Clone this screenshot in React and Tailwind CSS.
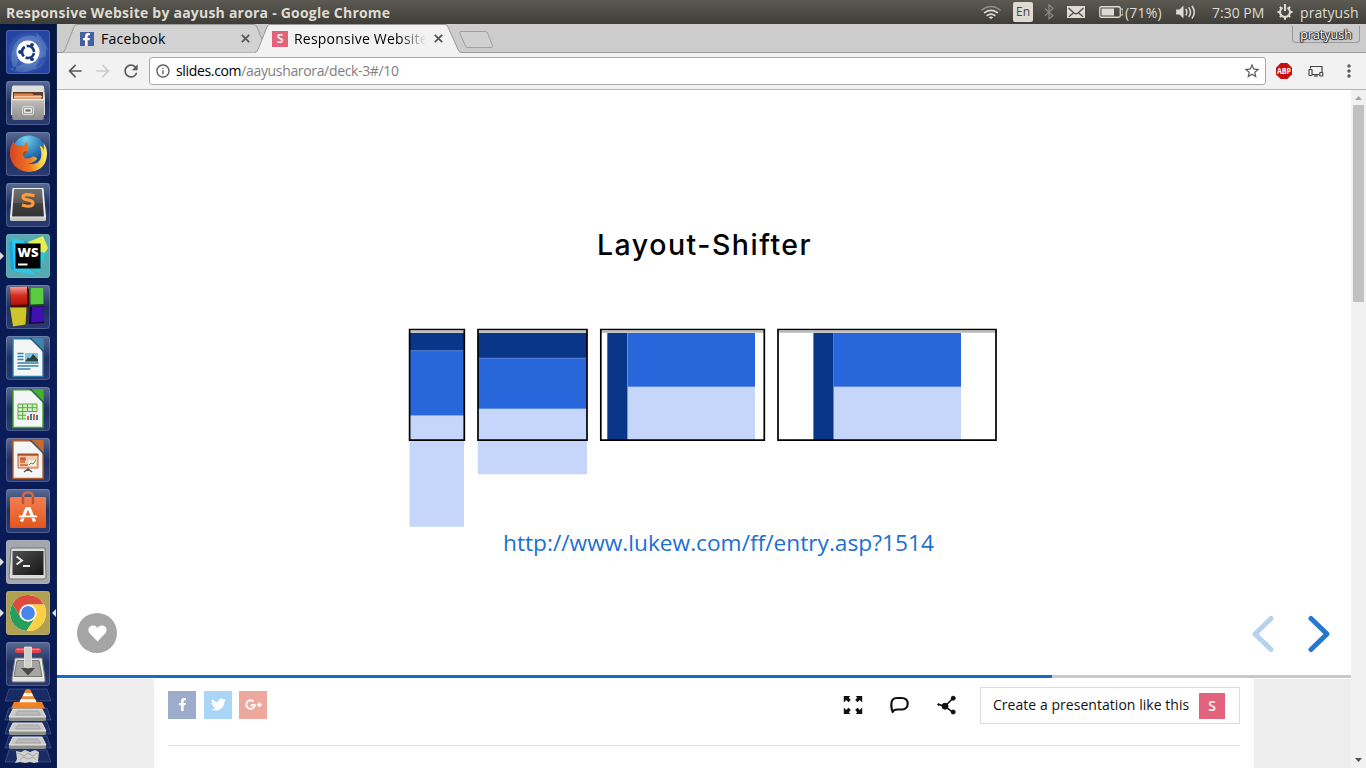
import React from "react";
import { FaFacebookF, FaTwitter } from "react-icons/fa";
import { MdArrowBack, MdArrowForward, MdRefresh, MdStarBorder, MdMoreVert, MdInfoOutline } from "react-icons/md";

const UI = "font-['Open_Sans','Noto_Sans',sans-serif]";

/* ---------- Top panel ---------- */

function Panel() {
  return (
    <header className="flex h-6 shrink-0 items-center bg-linear-to-b from-[#5c5a52] to-[#3e3d39] pl-1.5 text-[#dfdbd2]">
      <h1 className="flex-1 whitespace-nowrap text-[14px] font-bold tracking-[0.22px]">
        Responsive Website by aayush arora - Google Chrome
      </h1>
      <svg className="h-6 w-[24px]" viewBox="979 0 24 24" fill="none" stroke="#dfdbd2" strokeWidth="1.6" strokeLinecap="round">
        <path d="M982 9.8q9-6.6 18 0" opacity=".45" />
        <path d="M984.6 12.7q6.400-4.600 12.800 0" />
        <path d="M987.200 15.500q3.800-2.800 7.600 0" />
        <path d="M989.300 17.300l1.700 1.500 1.700-1.500q-1.700-1.100-3.400 0z" fill="#dfdbd2" strokeWidth=".6" />
      </svg>
      <span className="ml-[10px] flex h-[20px] w-[20px] items-center justify-center rounded-[2px] bg-[#dfdbd2] text-[12px] text-[#45433e]">
        En
      </span>
      <svg className="ml-[10px] h-6 w-[12px]" viewBox="1043 0 12 24" fill="none" stroke="#8b8880" strokeWidth="1.3">
        <path d="M1045 8.500l8 7.200-4 3V5l4 3.300-8 7.400" />
      </svg>
      <svg className="ml-[12px] h-6 w-[18px]" viewBox="0 0 18 24">
        <rect y="6" width="18" height="12" fill="#dfdbd2" />
        <path d="M1.500 8l5.500 5 1.500.8h1l1.500-.8 5.500-5M2 16.800l4.500-4M16 16.800l-4.500-4" fill="none" stroke="#4a4843" strokeWidth="1.200" />
      </svg>
      <svg className="ml-[14px] h-6 w-[24px]" viewBox="0 0 24 24">
        <rect x=".75" y="6.750" width="20.500" height="10.500" rx="1.500" fill="none" stroke="#dfdbd2" strokeWidth="1.300" />
        <rect x="2.500" y="8.500" width="12.500" height="7" fill="#dfdbd2" />
        <path d="M22 9h2v6h-2" fill="none" stroke="#dfdbd2" />
      </svg>
      <span className="ml-[2px] w-[40px] whitespace-nowrap text-[14px] tracking-[0.2px]">(71%)</span>
      <svg className="ml-[11px] h-6 w-[21px]" viewBox="0 0 21 24" fill="none" stroke="#dfdbd2" strokeWidth="1.500" strokeLinecap="round">
        <path d="M.5 10h3l3.500-3.500v11L3.500 14h-3z" fill="#dfdbd2" strokeWidth="1" />
        <path d="M10 9.500q1.800 2.700 0 5.400M13 7.800q3 4.400 0 8.600M16.200 6.300q4.200 5.900 0 11.700" />
      </svg>
      <span className="ml-[15px] w-[54px] whitespace-nowrap text-[14px]">7:30 PM</span>
      <svg className="ml-[11px] h-6 w-[16px]" viewBox="0 0 16 24" fill="none" stroke="#dfdbd2">
        <path d="M5.500 7.700a5 5 0 1 0 5 0" strokeWidth="2" />
        <path d="M8 4v7" strokeWidth="2" />
        <path d="M2.900 6.900l1.500 1.500M13.100 6.900l-1.500 1.500M.5 12h2.500M13 12h2.500M2.900 17.100l1.500-1.500M13.100 17.100l-1.500-1.500M8 17v2.800" strokeWidth="2" />
      </svg>
      <span className="ml-[7px] w-[66px] whitespace-nowrap text-[14px] tracking-[0.1px]">pratyush</span>
    </header>
  );
}

/* ---------- Launcher ---------- */

const DashIcon = () => (
  <>
    <defs>
      <radialGradient id="dash"><stop offset="0" stopColor="#6d92d2" /><stop offset="1" stopColor="#2344a0" /></radialGradient>
    </defs>
    <rect width="44" height="44" rx="3" fill="url(#dash)" />
    <path d="M9 42Q1 27 10 13q6-7 13-7Q12 12 13 25M30 2q10 8 10 20 0 13-12 18 6-8 5-18M7 18Q15 0 34 8q6 4 8 13-8-9-16-9M3 39q11 6 23 1 12-5 14-14" fill="#8eaee0" opacity=".3" />
    <circle cx="22" cy="22" r="11.500" fill="#fff" />
    <circle cx="22" cy="22" r="6" fill="none" stroke="#16397c" strokeWidth="2.600" strokeDasharray="10.600 2" strokeDashoffset="-1" />
    <g fill="#16397c"><circle cx="14" cy="22" r="1.900" /><circle cx="26" cy="14.800" r="1.900" /><circle cx="26" cy="29.200" r="1.900" /></g>
  </>
);
const FilesIcon = () => (
  <>
    <defs><linearGradient id="fil" x2="0" y2="1"><stop offset="0" stopColor="#c2c1bf" /><stop offset="1" stopColor="#8e8d8b" /></linearGradient></defs>
    <path d="M7.500 4.500h29q1.200 0 1.500 1.500l1 10v18H5V16L6 6q.3-1.500 1.500-1.500z" fill="#dededc" />
    <path d="M7 11h30v8H7z" fill="#5d4034" />
    <path d="M8 12.500h18l2 1.500h7v5H8z" fill="#e4813f" />
    <path d="M8 15h28v1.500H8z" fill="#f9c9a2" />
    <path d="M5.500 18h33l-.8 19.500q-.2 1.500-2 1.500H8q-1.500 0-1.700-1.500z" fill="url(#fil)" />
    <path d="M5.500 17.700h33v1.500h-33z" fill="#f0f0ee" />
    <rect x="16.500" y="25.500" width="11" height="8" rx="1.500" fill="#a5a4a2" stroke="#dcdcda" />
    <rect x="18.800" y="27.800" width="6.400" height="3.400" fill="#666" stroke="#fff" strokeWidth="1.200" />
  </>
);
const FirefoxIcon = () => (
  <>
    <defs>
      <radialGradient id="ffb" cx=".4" cy=".1" r=".7"><stop offset="0" stopColor="#6fd3f2" /><stop offset="1" stopColor="#11509c" /></radialGradient>
      <linearGradient id="ffo" x1="0" x2="1"><stop offset="0" stopColor="#d8431f" /><stop offset=".55" stopColor="#ee7a22" /><stop offset=".85" stopColor="#fbd23f" /><stop offset="1" stopColor="#fff08a" /></linearGradient>
    </defs>
    <circle cx="23" cy="20.500" r="17" fill="url(#ffb)" />
    <path d="M7.500 9q.5 3 2.500 4.500 4-1 7 1l4-5q0 4 1.500 6.500l-.5 4q-3 1-5 3 .5 3.500 4 3.500 3.500 0 6-2 4 .5 4 2.500-4 5-10 4 10 3 13.500-4 2-6-1-14 3.500 2 4.500 6l-.5-8q5 7 3 15-2.500 13-17.500 14Q6.500 38.500 4 24q-.5-9 3.500-15z" fill="url(#ffo)" />
    <path d="M17.500 20q2-1 4.500-.5l-5 3.500z" fill="#7c2712" opacity=".6" />
  </>
);
const SublimeIcon = () => (
  <>
    <defs><linearGradient id="sub" x2="0" y2="1"><stop offset="0" stopColor="#727272" /><stop offset=".5" stopColor="#565656" /><stop offset=".52" stopColor="#424242" /><stop offset="1" stopColor="#333" /></linearGradient></defs>
    <path d="M6.500 5h31l2.500 29v2q0 2-2 2H6q-2 0-2-2v-2z" fill="#f0f0f0" />
    <path d="M4.200 34.500h35.600v1.500q0 2-2 2H6.200q-2 0-2-2z" fill="#c4c4c4" />
    <path d="M8 6h28l2 27.500H6z" fill="url(#sub)" />
    <path d="M28.500 12.800q-11-2.800-11.500 1.200 0 2.200 5.200 3 5.300 1 4.800 4-1.500 3.800-11 1" fill="none" stroke="#ff9a36" strokeWidth="3.200" />
  </>
);
const WebStormIcon = () => (
  <>
    <rect width="44" height="44" rx="3" fill="#56a9ae" />
    <path d="M3 8l19-1L14 38 5 35z" fill="#15a6e8" />
    <path d="M22 8l15-6 5 12-8 12z" fill="#e6ee55" />
    <path d="M6 4l12 3 4 27 8 7-22-4z" fill="#2fc8ea" />
    <path d="M31 17l9 2-7 19-8-3z" fill="#20cce0" />
    <rect x="9.500" y="9.500" width="25" height="25" fill="#000" />
    <text x="11.500" y="22.500" fontSize="13" fontWeight="800" fill="#fff" textLength="21" lengthAdjust="spacingAndGlyphs" className="font-['Open_Sans',sans-serif]">WS</text>
    <path d="M12 30.500h9.500" stroke="#fff" strokeWidth="1.800" />
  </>
);
const BlocksIcon = () => (
  <>
    <defs><linearGradient id="redb" x2="0" y2="1"><stop offset="0" stopColor="#f0a098" /><stop offset=".5" stopColor="#d62a1f" /><stop offset="1" stopColor="#b31309" /></linearGradient></defs>
    <path d="M4 2l17-.5 2 3v17L5 23z" fill="#380909" />
    <path d="M4 2l17-.5.5 18L5 20z" fill="url(#redb)" />
    <path d="M24 3h14v18H25z" fill="#164d0c" /><path d="M24.500 3h13v16l-13 .5z" fill="#58cb3e" />
    <path d="M4 22l18-.5v17L7 42z" fill="#39350b" /><path d="M4 22.500h16.500l-1 17L7 41.500z" fill="#cec52d" />
    <path d="M24 22l14-1v17l-15 1z" fill="#180044" /><path d="M26 22l12-.5v15l-13 1z" fill="#4210b1" />
  </>
);
function DocIcon({ edge, fold, children }) {
  return (
    <>
      <path d="M7 2.700h19L37 14v26.500H7z" fill="#f4f5f5" stroke={edge} strokeWidth="1.400" />
      <path d="M26 2h11.700v12.500z" fill={fold} />
      <path d="M25 2l13 13v2L23 2z" fill="#123b68" opacity=".75" />
      {children}
    </>
  );
}
const WriterIcon = () => (
  <DocIcon edge="#287caa" fold="#3d86b0">
    <rect x="19" y="17" width="13" height="8.500" fill="#82c4e4" /><path d="M19 25.500l3-4 2 1 3-4.500 5 5.500v2z" fill="#28453c" />
    <path d="M11.500 17.500h6M11.500 20.500h6M11.500 23.500h6M11.500 27h21M11.500 30h21M11.500 33h13" stroke="#3683b4" strokeWidth="1.500" />
  </DocIcon>
);
const CalcIcon = () => (
  <DocIcon edge="#38a220" fold="#45b02a">
    <path d="M12 17h19v15H12z" fill="#d5f0c6" />
    <path d="M12 17h19v15H12zM12 20.700h19M12 24.500h19M12 28.300h19M16.700 17v15M21.500 17v15M26.300 17v15" fill="none" stroke="#58ab45" />
    <path d="M20 25h12v9H20z" fill="#eee" /><path d="M21 29h2v4h-2zM27 27h2v6h-2z" fill="#d86b34" /><path d="M24 27h2v6h-2zM30 28h2v5h-2z" fill="#3a7eb7" />
  </DocIcon>
);
const ImpressIcon = () => (
  <DocIcon edge="#b65d2b" fold="#c66931">
    <path d="M12 17h20v13H12z" fill="#f7c9ae" stroke="#bf6339" /><path d="M11.500 16.500h21" stroke="#a55027" strokeWidth="2" />
    <path d="M14 20h5v2h-5M14 24h5M14 27h9" stroke="#c76337" strokeWidth="1.500" fill="#c76337" />
    <path d="M22 22h8v6h-8z" fill="#eaf0e5" /><path d="M23 27l2-2 2 1 3-4" stroke="#43a141" fill="none" />
    <path d="M22 30v3M18 34l4-3 4 3" stroke="#555" strokeWidth="1.500" fill="none" />
  </DocIcon>
);
const SoftwareIcon = () => (
  <>
    <defs><linearGradient id="bag" x2="0" y2="1"><stop offset="0" stopColor="#f28050" /><stop offset="1" stopColor="#e3551d" /></linearGradient></defs>
    <path d="M17 13V7.500q0-4 5-4t5 4V13" fill="none" stroke="#d2684a" strokeWidth="2.600" />
    <path d="M4 9q0-1 1-1h34q1 0 1 1v29q0 1-1 1H5q-1 0-1-1z" fill="url(#bag)" />
    <path d="M17 14V9M27 14V9" stroke="#c05030" strokeWidth="2.600" strokeLinecap="round" />
    <path d="M15.500 32.500l5.200-13h2.600l5.200 13" fill="none" stroke="#fff" strokeWidth="3.200" />
    <path d="M13 27.500h18" stroke="#fff" strokeWidth="1.800" /><path d="M14 28.900h16" stroke="#e8662f" strokeWidth=".8" />
  </>
);
const TerminalIcon = () => (
  <>
    <defs><linearGradient id="term" x2="1" y2="1"><stop offset="0" stopColor="#505050" /><stop offset="1" stopColor="#151515" /></linearGradient></defs>
    <rect width="44" height="44" rx="3" fill="#a5a7ae" />
    <path d="M5 8h34l1 29q0 2-2 2H5q-2 0-2-2z" fill="#dbdcd9" stroke="#73736f" />
    <rect x="6.500" y="11" width="31" height="24" fill="url(#term)" />
    <path d="M10.500 16.500l5.500 4-5.500 4M17 26h7" fill="none" stroke="#eee" strokeWidth="1.800" />
  </>
);
const ChromeIcon = () => (
  <>
    <rect width="44" height="44" rx="3" fill="#b1a052" />
    <circle cx="22" cy="22" r="18" fill="#fff" />
    <path d="M22 13.500H37.900A18 18 0 0 0 6.400 13L14.500 26.500A9 9 0 0 1 22 13.500z" fill="#dc4b3e" />
    <path d="M6.400 13A18 18 0 0 0 20.500 40L29 27A9 9 0 0 1 14.500 26.500z" fill="#25a05c" />
    <path d="M37.900 13.500A18 18 0 0 1 20.500 40L29.500 26.500A9 9 0 0 0 22 13.500z" fill="#fdcf42" />
    <circle cx="22" cy="22" r="8.500" fill="#fff" /><circle cx="22" cy="22" r="6.900" fill="#4886ed" />
  </>
);
const TransmissionIcon = () => (
  <>
    <path d="M9 16h27l3 20v3q0 1-1 1H7q-1 0-1-1v-3z" fill="#e4e5e2" stroke="#747471" />
    <path d="M11 18.500h22l3 16H8z" fill="#a5a6a2" stroke="#777" />
    <rect x="9" y="6" width="26" height="5" rx="2.500" fill="#df4247" /><path d="M10.500 7.300h23" stroke="#f3989a" />
    <path d="M19 20h6v6h4l-7 7.500-7-7.500h4z" fill="#4a4b48" />
    <path d="M18.500 5h7v20q-3.500 2-7 0z" fill="#cfcfcc" stroke="#f2f2f0" strokeWidth=".7" />
  </>
);

const APPS = [
  { icon: DashIcon }, { icon: FilesIcon }, { icon: FirefoxIcon }, { icon: SublimeIcon },
  { icon: WebStormIcon, running: true }, { icon: BlocksIcon }, { icon: WriterIcon }, { icon: CalcIcon },
  { icon: ImpressIcon }, { icon: SoftwareIcon }, { icon: TerminalIcon, running: true },
  { icon: ChromeIcon, running: true, active: true }, { icon: TransmissionIcon },
];

function FoldedStack() {
  return (
    <svg className="h-[80px] w-[56px] shrink-0" viewBox="0 688 56 80">
      {[689, 708, 722, 736, 750].map((y) => (
        <path key={y} d={`M9 ${y}h38l4 12H5z`} fill="#40568e" fillOpacity=".3" stroke="#6075a4" strokeOpacity=".45" />
      ))}
      <path d="M14 702h28l3 6.500H11z" fill="#ef801d" />
      <path d="M25.500 690q2.500-2 5 0l7 14q-9.500 4-19 0z" fill="#f0872b" />
      <path d="M24.300 693h7.400l1.600 3.200h-10.600zM21 699h14l1.700 3.200H19.300z" fill="#f7f4ed" />
      {[710, 724, 738].map((y) => (
        <g key={y}>
          <path d={`M13 ${y - 1}h29l4 8v3q0 1-2 1H11q-2 0-2-1v-3z`} fill="#8d8f8d" />
          <path d={`M13 ${y - 1}h29l4 8H9z`} fill="#c9cac8" stroke="#f2f2f0" strokeWidth=".8" />
          <path d={`M18 ${y + 1}h20l2.500 4H15.500z`} fill="#bbbcba" stroke="#999" strokeWidth=".7" />
        </g>
      ))}
      <path d="M16 751l5 1 4-2 5 2 5-2 4 2-1 9 1 1-5 1-4-1-5 1-5-1-5 1 2-4z" fill="#cfd1ce" />
      <path d="M18 753l6 3 4-3 5 3 4-3M20 760l3-3 5 2 5-2 3 3" fill="none" stroke="#a5a8a6" strokeWidth="1" />
    </svg>
  );
}

function Launcher() {
  return (
    <nav className="flex w-[57px] shrink-0 flex-col border-r border-[#15234f] bg-linear-to-b from-[#041640] via-[#0a1d5a] to-[#091a51]">
      <div className="flex flex-col gap-[7px] pt-[6px] pb-[2px]">
        {APPS.map(({ icon: Icon, running, active }, i) => (
          <div key={i} className="flex h-[44px] items-center">
            <svg className="h-[10px] w-[6px]" viewBox="0 0 6 10">{running && <path d="M0 1l4 4-4 4z" fill="#dcdcdc" />}</svg>
            <div className="h-[44px] w-[44px] overflow-hidden rounded-[3px] bg-linear-to-b from-[#5a6b93] via-[#1e2f62] to-[#2a3b72]">
              <svg viewBox="0 0 44 44" className="h-full w-full">
                <Icon />
                <rect x=".5" y=".5" width="43" height="43" rx="3" fill="none" stroke="#b9c5df" strokeOpacity=".25" />
              </svg>
            </div>
            <svg className="h-[10px] w-[6px]" viewBox="0 0 6 10">{active && <path d="M6 1L2 5l4 4z" fill="#dcdcdc" />}</svg>
          </div>
        ))}
      </div>
      <FoldedStack />
    </nav>
  );
}

/* ---------- Browser chrome ---------- */

const CloseX = () => (
  <svg className="h-[9px] w-[9px] shrink-0" viewBox="0 0 9 9"><path d="M.8.8l7.400 7.400M8.200.8L.8 8.200" stroke="#555" strokeWidth="1.700" /></svg>
);

function TabStrip() {
  return (
    <div className="flex h-[29px] shrink-0 bg-[#ccc] shadow-[inset_0_-1px_0_#999]">
      <div className="relative ml-[5px] h-[29px] w-[207px]">
        <svg className="absolute inset-0 h-full w-full" viewBox="0 0 207 29">
          <path d="M.5 28.500Q2 28 3 25.500L12 3Q13 .5 15 .5H192q2 0 3 2.500L204 25.500q1 2.500 3 3" fill="#d2d2d2" stroke="#999" />
        </svg>
        <div className="relative flex h-full items-center pl-[18px]">
          <span className="flex h-[14px] w-[14px] items-end justify-end bg-[#4460a0] pr-[1px] text-[13px] text-white"><FaFacebookF /></span>
          <span className="ml-[7px] w-[140px] whitespace-nowrap text-[14px] tracking-[0.3px]">Facebook</span>
          <CloseX />
        </div>
      </div>
      <div className="relative ml-[-14px] h-[29px] w-[207px]">
        <svg className="absolute inset-0 h-full w-full" viewBox="0 0 207 29">
          <path d="M0 29Q2 28 3 25.500L12 3Q13 .5 15 .5H190q2 0 3 2.500L203 25.500q1 2.500 3 3V29z" fill="#f2f2f2" />
          <path d="M0 28.500Q2 28 3 25.500L12 3Q13 .5 15 .5H190q2 0 3 2.500L203 25.500q1 2.500 3 3" fill="none" stroke="#999" />
        </svg>
        <div className="relative flex h-full items-center pl-[17px]">
          <span className="flex h-[16px] w-[16px] items-center justify-center bg-[#e4637c] text-[12px] font-semibold text-white">S</span>
          <span className="ml-[6px] w-[132px] overflow-hidden whitespace-nowrap text-[14px] tracking-[0.22px] [mask-image:linear-gradient(to_right,#000_106px,transparent_132px)]">
            Responsive Website
          </span>
          <span className="ml-[8px] flex"><CloseX /></span>
        </div>
      </div>
      <svg className="ml-[-4px] h-[29px] w-[36px]" viewBox="458 0 36 29">
        <path d="M461 7.500h24.500q1.500 0 2 1.500l5 12.500q.5 2-1.500 2h-23q-2 0-2.500-1.500L459.700 9q-.5-1.500 1.300-1.500z" fill="#d0d0d0" stroke="#a0a0a0" />
      </svg>
      <div className="ml-auto mr-[6px] mt-[2px] flex h-[17px] w-[68px] items-end justify-center rounded-b-[4px] border border-t-0 border-[#999] text-[12.500px] leading-[15px] text-white [text-shadow:0_0_1px_#222,0_0_1px_#222,0_1px_1px_#222,1px_0_1px_#222,-1px_0_1px_#222]">
        pratyush
      </div>
    </div>
  );
}

function Toolbar() {
  return (
    <div className="flex h-[37px] shrink-0 items-center border-b border-[#b5b5b5] bg-[#f2f2f2] text-[#5a5a5a]">
      <MdArrowBack className="ml-[8px] h-[20px] w-[20px]" />
      <MdArrowForward className="ml-[8px] h-[20px] w-[20px] text-[#ccc]" />
      <MdRefresh className="ml-[8px] h-[20px] w-[20px]" />
      <div className="ml-[8px] flex h-[28px] w-[1117px] items-center rounded-[3px] border border-[#a9a9a9] bg-white">
        <MdInfoOutline className="ml-[5px] h-[16px] w-[16px]" />
        <span className="ml-[5px] flex-1 whitespace-nowrap pb-[2px] text-[14px] tracking-[-0.34px] text-[#808080]">
          <span className="text-black">slides.com</span>/aayusharora/deck-3#/10
        </span>
        <MdStarBorder className="mr-[4px] h-[18px] w-[18px]" />
      </div>
      <svg className="ml-[10px] h-[16px] w-[16px]" viewBox="0 0 16 16">
        <path d="M4.700 0h6.600L16 4.700v6.600L11.300 16H4.700L0 11.300V4.700z" fill="#c70d0d" />
        <text x="1" y="11.200" fontSize="9" fontWeight="bold" fill="#fff" textLength="14" lengthAdjust="spacingAndGlyphs">ABP</text>
      </svg>
      <svg className="ml-[16px] h-[14px] w-[16px]" viewBox="0 0 16 14" fill="none" stroke="#444">
        <path d="M2.500 4.500v-2h11.500V9M4 10.500h7" strokeWidth="1.200" />
        <rect x="1" y="5.500" width="3" height="6" rx=".5" fill="#fff" strokeWidth="1.200" /><path d="M6 12h4M8 10.500v2" />
        <rect x="11.800" y="8.500" width="3" height="3.500" rx=".5" fill="#fff" strokeWidth="1.200" />
      </svg>
      <MdMoreVert className="ml-[15px] h-[20px] w-[20px]" />
    </div>
  );
}

/* ---------- Slide ---------- */

function LayoutDiagram() {
  return (
    <svg className="h-[200px] w-[590px]" viewBox="408 328 590 200">
      <g fill="#c5d6fa">
        <path d="M409.500 415.500h54.500v111.300h-54.500zM477.800 408.700H587v65.600H477.800zM627.800 387H755v53H627.800zM833.800 387H961v53H833.800z" />
      </g>
      <path d="M410 350h54v65.500h-54zM478 358h109v50.700H478zM627.800 333H755v53.700H627.800zM833.800 333H961v53.700H833.800z" fill="#2866db" />
      <path d="M410 333h54v17.500h-54zM478 333h109v25H478zM607.300 333h20.200v107h-20.200zM813.400 333h20.200v107h-20.200z" fill="#0a368a" />
      <path d="M410 350.700h54M478 358.200h109M627.700 333v54" stroke="#6c8fce" strokeWidth=".7" />
      <path d="M410 331.800h54M478 331.800h109M601 331.800h163M778 331.800h218" stroke="#b7bcb9" strokeWidth="2" />
      <path d="M409.600 329.500h54.700v110.700h-54.700zM478 329.500h109v110.700H478zM600.800 329.500h163.500v110.700H600.800zM778 329.500h218v110.700H778z" fill="none" stroke="#000" strokeWidth="1.700" />
    </svg>
  );
}

function Slide() {
  return (
    <section className="flex h-[585px] shrink-0 flex-col bg-white">
      <h2 className="mt-[133px] ml-[540px] h-[44px] whitespace-nowrap font-['Inter',sans-serif] text-[28.5px] leading-[44px] font-medium tracking-[1.5px] text-black">
        Layout-Shifter
      </h2>
      <div className="mt-[61px] ml-[351px] h-[200px]"><LayoutDiagram /></div>
      <a className="ml-[446px] h-[32px] whitespace-nowrap text-[22.700px] leading-[30px] text-[#1b70cf]">http://www.lukew.com/ff/entry.asp?1514</a>
      <div className="mt-[53px] flex items-center pl-[20px] pr-[21px]">
        <span className="flex h-[40px] w-[40px] items-center justify-center rounded-full bg-[#a5a5a5]">
          <svg className="h-[17px] w-[19px]" viewBox="0 0 19 17"><path d="M9.500 16.500L1.200 7.700C-1.300 3.500 2 .5 5 .5q3 0 4.500 2.300Q11 .5 14 .5c3 0 6.300 3 3.800 7.200z" fill="#fff" /></svg>
        </span>
        <svg className="ml-auto h-[40px] w-[80px]" viewBox="0 0 80 40" fill="none" strokeWidth="5" strokeLinecap="round" strokeLinejoin="round">
          <path d="M21 5.500L5 21l16 15.500" stroke="#b7d2ef" /><path d="M61 5.500L77 21 61 36.500" stroke="#2577d2" />
        </svg>
      </div>
    </section>
  );
}

function ActionBar() {
  return (
    <section className="flex flex-1 flex-col bg-[#ededed]">
      <div className="mx-[97px] flex flex-1 flex-col bg-white px-[14px]">
        <div className="flex h-[67px] shrink-0 items-start border-b border-[#dcdcdc] pt-[8px]">
          <span className="mt-[4px] flex h-[28px] w-[28px] items-center justify-center bg-[#9eaccc] pb-[2px] text-[13px] text-white"><FaFacebookF /></span>
          <span className="mt-[4px] ml-[8px] flex h-[28px] w-[28px] items-center justify-center bg-[#aad5f7] pb-[2px] text-[15px] text-white"><FaTwitter /></span>
          <span className="mt-[4px] ml-[7px] flex h-[28px] w-[28px] items-center justify-center bg-[#eea79d]">
            <svg className="h-[12px] w-[17px]" viewBox="0 0 17 12" fill="none" stroke="#fff" strokeWidth="1.900">
              <path d="M8.700 2.500A4.300 4.300 0 1 0 9.900 6.200H5.700" /><path d="M12.200 5.700h4.400M14.400 3.500v4.400" />
            </svg>
          </span>
          <svg className="mt-[8px] ml-[576px] h-[20px] w-[20px]" viewBox="843 695 20 20">
            <path d="M843.800 696h6.400l-1.400 1.700 2 2.200-2.300 2.300-2.300-2.200-2.400 2.400zM862.200 696h-6.400l1.400 1.700-2 2.200 2.300 2.300 2.300-2.200 2.400 2.400zM843.800 714h6.400l-1.400-1.700 2-2.200-2.300-2.300-2.300 2.200-2.400-2.400zM862.200 714h-6.400l1.400-1.700-2-2.200 2.300-2.300 2.300 2.200 2.400-2.400z" fill="#111" />
          </svg>
          <svg className="mt-[8px] ml-[26px] h-[20px] w-[20px]" viewBox="0 0 20 20" fill="none" stroke="#111" strokeWidth="2.200">
            <path d="M8 3h4.500c4 0 6.200 2.200 6.200 5.700S16 14.500 12.500 14.500H8q-3.500.2-4.300 2.500Q2.300 14 2.300 9.500 2.300 3 8 3z" strokeLinejoin="round" />
          </svg>
          <svg className="mt-[8px] ml-[28px] h-[20px] w-[20px]" viewBox="0 0 20 20" fill="#111" stroke="#111">
            <path d="M1 9.300l7 2 8-8M8 11.300l8 6" fill="none" strokeWidth="1.500" />
            <circle cx="8" cy="11.200" r="3" /><circle cx="16.200" cy="3.200" r="2" /><circle cx="16.200" cy="17" r="2" /><circle cx="1.500" cy="9.500" r=".8" />
          </svg>
          <button className="ml-auto flex h-[37px] w-[260px] items-center border border-[#dcdcdc] bg-white pl-[12px]">
            <span className="w-[206px] whitespace-nowrap pb-[2px] text-left text-[14px] tracking-[0.04px] text-[#111]">Create a presentation like this</span>
            <span className="flex h-[26px] w-[26px] items-center justify-center bg-[#e4637c] text-[14px] font-semibold text-white">S</span>
          </button>
        </div>
      </div>
    </section>
  );
}

function Scrollbar() {
  return (
    <div className="flex w-[15px] shrink-0 flex-col items-center bg-[#f1f1f1]">
      <svg className="h-[15px] w-[15px]" viewBox="0 0 15 15"><path d="M4 10l3.500-4 3.500 4z" fill="#a3a3a3" /></svg>
      <div className="h-[197px] w-[11px] bg-[#c1c1c1]" />
      <svg className="mt-auto h-[15px] w-[15px]" viewBox="0 0 15 15"><path d="M4 5l3.500 4L11 5z" fill="#505050" /></svg>
    </div>
  );
}

export default function App() {
  return (
    <div className={`flex h-[768px] w-[1366px] flex-col overflow-hidden bg-white text-black ${UI}`}>
      <Panel />
      <div className="flex min-h-0 flex-1">
        <Launcher />
        <div className="flex min-w-0 flex-1 flex-col">
          <TabStrip />
          <Toolbar />
          <div className="flex min-h-0 flex-1">
            <main className="flex min-w-0 flex-1 flex-col">
              <Slide />
              <div className="flex h-[4px] shrink-0 border-b border-white bg-[#c9c9c9]"><div className="w-[995px] bg-[#146bca]" /></div>
              <ActionBar />
            </main>
            <Scrollbar />
          </div>
        </div>
      </div>
    </div>
  );
}
